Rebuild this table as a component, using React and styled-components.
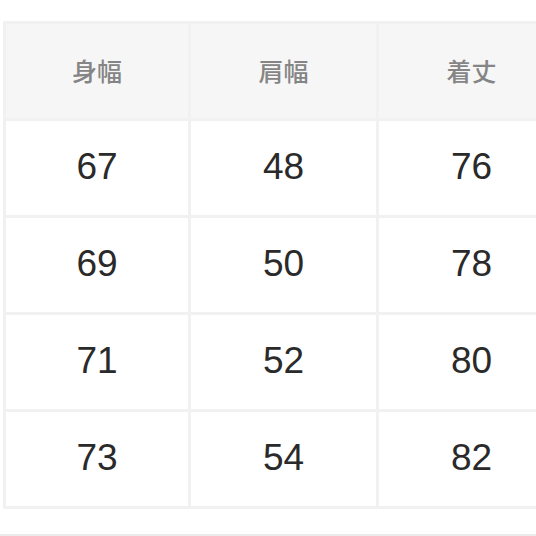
import React from "react";
import styled, { createGlobalStyle } from "styled-components";

const GlobalStyle = createGlobalStyle`
  html, body {
    margin: 0;
    padding: 0;
    background: #ffffff;
    overflow: hidden;
  }
  body {
    font-family: "Liberation Sans", "Noto Sans CJK JP", sans-serif;
  }
`;

const Page = styled.div`
  width: 536px;
  height: 536px;
  display: flex;
  flex-direction: column;
  padding-top: 21px;
  box-sizing: border-box;
  overflow: hidden;
`;

const Table = styled.div`
  display: grid;
  grid-template-columns: 182px 185px 185px;
  grid-auto-rows: 94px;
  gap: 3px;
  padding: 3px;
  margin-left: 3px;
  width: max-content;
  background: #f1f1f1;
`;

const HeadCell = styled.div`
  display: flex;
  align-items: center;
  justify-content: center;
  background: #f6f6f6;
  color: #858585;
  font-family: "Noto Sans CJK JP", sans-serif;
  font-weight: 500;
  font-size: 25px;
  padding-bottom: 2px;
`;

const Cell = styled.div`
  display: flex;
  align-items: center;
  justify-content: center;
  background: #ffffff;
  color: #2a2a2a;
  font-size: 37px;
  padding-bottom: 2px;
`;

const Divider = styled.div`
  margin-top: 25px;
  height: 2px;
  flex-shrink: 0;
  background: #ebebeb;
`;

const headers = ["身幅", "肩幅", "着丈"];
const rows = [
  [67, 48, 76],
  [69, 50, 78],
  [71, 52, 80],
  [73, 54, 82],
];

export default function App() {
  return (
    <>
      <GlobalStyle />
      <Page>
        <Table>
          {headers.map((h) => (
            <HeadCell key={h}>{h}</HeadCell>
          ))}
          {rows.map((r, i) =>
            r.map((v, j) => <Cell key={`${i}-${j}`}>{v}</Cell>)
          )}
        </Table>
        <Divider />
      </Page>
    </>
  );
}
